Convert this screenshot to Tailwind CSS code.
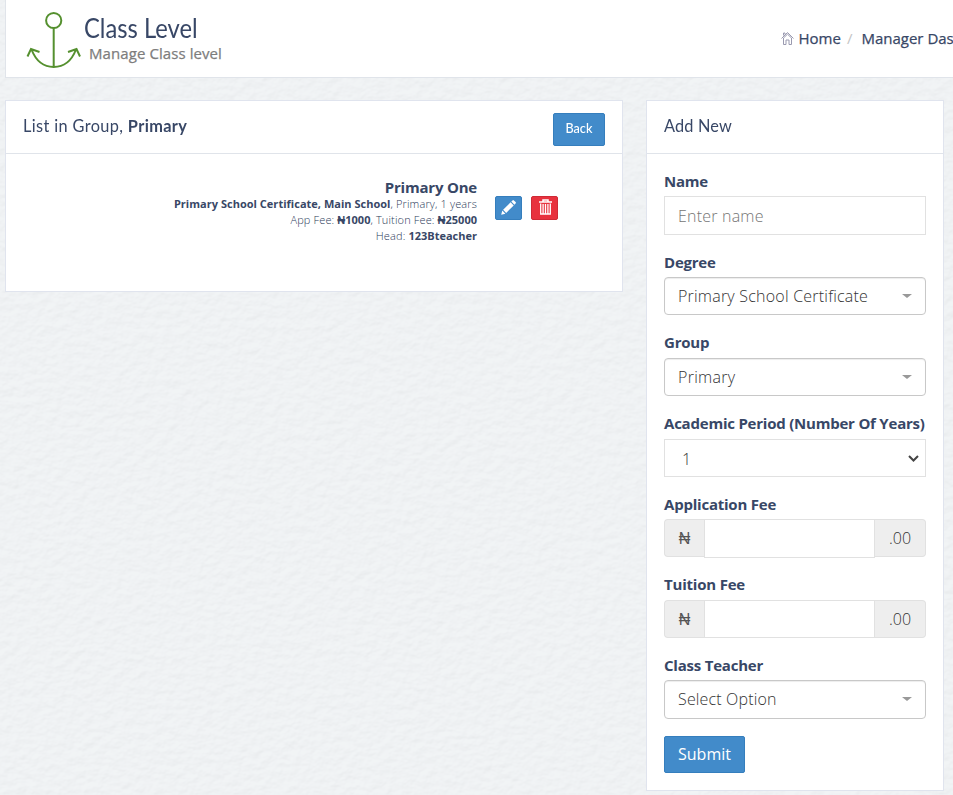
<!DOCTYPE html>
<html lang="en">
<head>
<meta charset="utf-8">
<title>Class Level</title>
<script src="https://cdn.jsdelivr.net/npm/@tailwindcss/browser@4"></script>
</head>
<body class="relative isolate h-[795px] w-[953px] overflow-hidden bg-[#f0f2f4] font-['Open_Sans',sans-serif] text-[#384766]">
<!-- paper texture -->
<svg class="absolute inset-0 -z-10 h-full w-full" aria-hidden="true">
  <filter id="paper" x="0" y="0" width="100%" height="100%" color-interpolation-filters="sRGB">
    <feTurbulence type="fractalNoise" baseFrequency="0.1 0.13" numOctaves="3" seed="4"/>
    <feDiffuseLighting lighting-color="#fafafb" surfaceScale="0.7" diffuseConstant="1.12"><feDistantLight azimuth="245" elevation="60"/></feDiffuseLighting>
  </filter>
  <rect width="100%" height="100%" fill="#eff2f4"/>
  <rect width="100%" height="100%" filter="url(#paper)" opacity="0.17"/>
</svg>

<header class="ml-[5px] flex h-[78px] border-b border-l border-[#e0e4ea] bg-white">
  <svg class="mt-[11px] ml-[20px] h-[58px] w-[56px] shrink-0" viewBox="0 0 56 58" fill="none" stroke="#55902f" stroke-width="2">
    <circle cx="27.7" cy="9.500" r="7.600"/>
    <path d="M27.7 17V56M5.500 38.500C10 50 18 56 27.700 56S45.500 50 50 38.500M1.500 45.500L5 38L13.500 41M42 41L50.500 38L54 45.500"/>
  </svg>
  <div class="w-[400px] whitespace-nowrap">
    <h1 class="mt-[12px] ml-[2px] h-[31px] origin-left scale-x-[0.880] font-['Lato',sans-serif] text-[27px] leading-[32px]">Class Level</h1>
    <p class="ml-[7px] text-[15px] leading-[20px] font-medium tracking-[0.080px] text-[#7d7d7d] [-webkit-text-stroke:0.25px_#7d7d7d]">Manage Class level</p>
  </div>
  <nav class="mt-[28px] ml-auto flex h-[21px] w-[172.500px] items-center overflow-hidden text-[15px] leading-[21px] font-medium whitespace-nowrap">
    <svg class="mr-[5px] mb-[2px] h-[14px] w-[13px] shrink-0" viewBox="0 0 13 14" fill="none" stroke="#9a9ab0" stroke-width="1"><path d="M.5 7.500L6.500 1.500L12.500 7.500M2.500 7V13.500H5V9H8V13.500H10.500V7L6.500 3.200L2.500 7M2.500 4.500V2H4V3.500"/></svg>
    <a class="[-webkit-text-stroke:0.25px_#384766]">Home</a><span class="mr-[9px] ml-[6px] text-[#c4c4c4]">/</span><a class="[-webkit-text-stroke:0.25px_#384766]">Manager Dashboard</a>
  </nav>
</header>

<main class="mt-[22px] ml-[5px] flex items-start gap-[23px]">
  <section class="h-[192px] w-[618px] border border-[#e0e4ee] bg-white">
    <div class="flex h-[53px] justify-between border-b border-[#e0e4ea] px-[17px]">
      <h2 class="mt-[13px] w-[300px] origin-left scale-x-[0.960] font-['Lato',sans-serif] text-[17px] leading-[24px] tracking-[0.380px]">List in Group, <b>Primary</b></h2>
      <button class="mt-[12px] h-[33px] w-[52px] rounded-[2px] border border-[#357ebd] bg-[#428bca] pb-[4px] font-['Lato',sans-serif] text-[14px] leading-[20px] font-medium text-white"><span class="inline-block scale-x-90">Back</span></button>
    </div>
    <div class="flex pt-[24px]">
      <div class="w-[471px] text-right text-[11px] leading-[16px] font-light tracking-[0.140px] text-[#2c3a59]">
        <h3 class="h-[18px] text-[15px] leading-[19px] font-bold tracking-[-0.200px] text-[#384766]">Primary One</h3>
        <p class="whitespace-nowrap"><b class="font-bold tracking-[0.020px] text-[#384766]">Primary School Certificate, Main School</b>, Primary, 1 years</p>
        <p>App Fee: <b class="font-bold tracking-normal text-[#384766]">₦1000</b>, Tuition Fee: <b class="font-bold tracking-normal text-[#384766]">₦25000</b></p>
        <p>Head: <b class="font-bold tracking-normal text-[#384766]">123Bteacher</b></p>
      </div>
      <button class="mt-[18px] ml-[18px] flex h-[24px] w-[27px] justify-center rounded-[2px] border border-[#357ebd] bg-[#428bca] pt-[3px]">
        <svg class="h-[15px] w-[15px]" viewBox="0 0 15 15" fill="#fff"><path d="M.2 14.800L1.300 10.600L4.400 13.700ZM2.100 9.800L9.600 2.300L12.700 5.400L5.200 12.900ZM10.300 1.600L11.500.4Q12.200-.2 12.900.4L14.600 2.100Q15.200 2.800 14.600 3.500L13.400 4.700Z"/></svg>
      </button>
      <button class="mt-[18px] ml-[9px] flex h-[24px] w-[27px] justify-center rounded-[2px] border border-[#cf2a36] bg-[#e8323e] pt-[2px]">
        <svg class="ml-[1px] h-[16px] w-[13px]" viewBox="0 0 13 16" fill="none" stroke="#fff"><path d="M0 3H13M4 3V1H9V3" stroke-width="1.500"/><path d="M1.700 4.500V15H11.300V4.500M4.100 5V15M6.500 5V15M8.900 5V15" stroke-width="1.300"/></svg>
      </button>
    </div>
  </section>

  <section class="h-[691px] w-[298px] border border-[#e0e4ee] bg-white">
    <div class="h-[53px] border-b border-[#e0e4ea] pt-[13px] pl-[17px]">
      <h2 class="origin-left scale-x-[0.960] font-['Lato',sans-serif] text-[17px] leading-[24px] tracking-[0.150px]">Add New</h2>
    </div>
    <form class="px-[17px] pt-[17px] text-[16px] font-light text-[#333]">
      <div class="h-[80.700px]">
        <label class="block h-[25px] text-[15px] leading-[21px] font-bold tracking-[-0.220px] whitespace-nowrap text-[#384766]">Name</label>
        <div class="flex h-[39px] items-center border border-[#e1e1e1] px-[13px] pt-px tracking-[0.200px] text-[#757575]">Enter name</div>
      </div>
      <div class="h-[80.700px]">
        <label class="block h-[25px] text-[15px] leading-[21px] font-bold tracking-[-0.220px] whitespace-nowrap text-[#384766]">Degree</label>
        <div class="flex h-[38px] items-center justify-between rounded-[4px] border border-[#c8c8c8] px-[13px] tracking-[0.220px] shadow-[inset_0_1px_1px_rgba(0,0,0,0.075)]">Primary School Certificate<i class="h-0 w-0 border-x-[5px] border-t-[4px] border-x-transparent border-t-[#999]"></i></div>
      </div>
      <div class="h-[80.700px]">
        <label class="block h-[25.800px] text-[15px] leading-[21px] font-bold tracking-[-0.220px] whitespace-nowrap text-[#384766]">Group</label>
        <div class="flex h-[38px] items-center justify-between rounded-[4px] border border-[#c8c8c8] px-[13px] tracking-[0.300px] shadow-[inset_0_1px_1px_rgba(0,0,0,0.075)]">Primary<i class="h-0 w-0 border-x-[5px] border-t-[4px] border-x-transparent border-t-[#999]"></i></div>
      </div>
      <div class="h-[80.700px]">
        <label class="block h-[25.800px] text-[15px] leading-[21px] font-bold tracking-[-0.220px] whitespace-nowrap text-[#384766]">Academic Period (Number Of Years)</label>
        <div class="flex h-[38px] items-center justify-between border border-[#e1e1e1] pt-[2px] pr-[6px] pl-[17px]">1<svg class="h-[8px] w-[11px]" viewBox="0 0 11 8" fill="none" stroke="#444" stroke-width="2"><path d="M1 1L5.500 5.500L10 1"/></svg></div>
      </div>
      <div class="h-[80.700px]">
        <label class="block h-[25px] text-[15px] leading-[21px] font-bold tracking-[-0.220px] whitespace-nowrap text-[#384766]">Application Fee</label>
        <div class="flex items-start">
          <div class="flex h-[38px] w-[40px] items-center justify-center rounded-l-[4px] border border-r-0 border-[#e1e1e1] bg-[#eee] text-[#555]">₦</div>
          <div class="h-[39px] w-[171px] border border-[#e1e1e1] bg-white"></div>
          <div class="flex h-[38px] w-[51px] items-center justify-center rounded-r-[4px] border border-l-0 border-[#e1e1e1] bg-[#eee]">.00</div>
        </div>
      </div>
      <div class="h-[80.700px]">
        <label class="block h-[25.800px] text-[15px] leading-[21px] font-bold tracking-[-0.200px] whitespace-nowrap text-[#384766]">Tuition Fee</label>
        <div class="flex items-start">
          <div class="flex h-[38px] w-[40px] items-center justify-center rounded-l-[4px] border border-r-0 border-[#e1e1e1] bg-[#eee] pb-px text-[#555]">₦</div>
          <div class="h-[38px] w-[171px] border border-[#e1e1e1] bg-white"></div>
          <div class="flex h-[38px] w-[51px] items-center justify-center rounded-r-[4px] border border-l-0 border-[#e1e1e1] bg-[#eee] pb-px">.00</div>
        </div>
      </div>
      <div class="h-[80.700px]">
        <label class="block h-[25px] text-[15px] leading-[21px] font-bold tracking-[-0.220px] whitespace-nowrap text-[#384766]">Class Teacher</label>
        <div class="flex h-[38.500px] items-center justify-between rounded-[4px] border border-[#c8c8c8] px-[13px] tracking-[0.150px] shadow-[inset_0_1px_1px_rgba(0,0,0,0.075)]">Select Option<i class="h-0 w-0 border-x-[5px] border-t-[4px] border-x-transparent border-t-[#999]"></i></div>
      </div>
      <button class="block h-[37px] w-[81px] rounded-[2px] border border-[#357ebd] bg-[#428bca] text-[16px] leading-[22px] font-normal text-white">Submit</button>
    </form>
  </section>
</main>
</body>
</html>
